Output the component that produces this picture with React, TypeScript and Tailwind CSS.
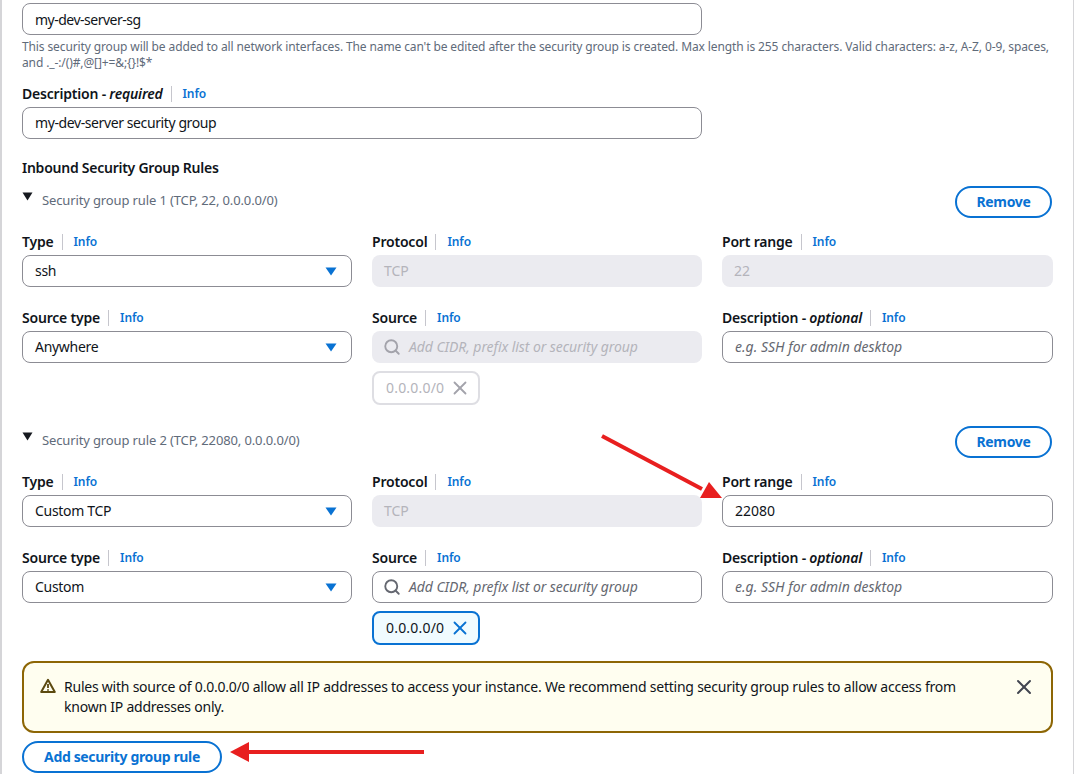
import React from "react";
import { Search, X } from "lucide-react";

function Info() {
  return <span className="text-[12px] font-semibold tracking-[-0.1px] text-[#0972d3] leading-5">Info</span>;
}

function Label({ text, hint }: { text: string; hint?: string }) {
  return (
    <div className="flex items-center h-[17px] pt-px text-[14px] leading-5 tracking-[-0.2px] text-[#0f141a]">
      <span className="font-semibold">
        {text}
        {hint && (
          <>
            {" - "}
            <i className="font-semibold">{hint}</i>
          </>
        )}
      </span>
      <span className="ml-2 mr-[11px] h-4 w-px bg-[#c6c6cd]" />
      <Info />
    </div>
  );
}

function TextBox({ value, placeholder }: { value?: string; placeholder?: string }) {
  return (
    <div className="mt-[5px] h-8 rounded-lg border border-[#8c8c94] bg-white pl-3 pb-[2px] flex items-center text-[14px] text-[#0f141a]">
      {value ? (
        <span className={value === "22080" ? "" : "tracking-[-0.4px]"}>{value}</span>
      ) : (
        <i className="text-[#656871]">{placeholder}</i>
      )}
    </div>
  );
}

function Disabled({ value }: { value: string }) {
  return (
    <div className="mt-[5px] h-8 rounded-lg bg-[#ebebf0] pl-3 pb-[2px] flex items-center text-[14px] text-[#b4b4bb]">
      {value}
    </div>
  );
}

function SelectBox({ value }: { value: string }) {
  return (
    <div className="mt-[5px] h-8 rounded-lg border border-[#8c8c94] bg-white pl-3 pr-[14px] flex items-center justify-between text-[14px] tracking-[-0.3px] text-[#0f141a]">
      <span className="pb-[2px]">{value}</span>
      <svg width="12" height="9" viewBox="0 0 12 9">
        <path d="M0.5 0.5h11L6 8.5z" fill="#0972d3" />
      </svg>
    </div>
  );
}

function SearchBox({ disabled }: { disabled?: boolean }) {
  return (
    <div
      className={
        disabled
          ? "mt-[5px] h-8 rounded-lg bg-[#ebebf0] pl-[11px] flex items-center gap-2 text-[14px] tracking-[-0.07px] text-[#b4b4bb]"
          : "mt-[5px] h-8 rounded-lg border border-[#8c8c94] bg-white pl-[10px] flex items-center gap-2 text-[14px] tracking-[-0.07px] text-[#656871]"
      }
    >
      <Search size={18} strokeWidth={2.5} className={disabled ? "text-[#a3a3ab]" : "text-[#656871]"} />
      <i className="pb-[2px]">Add CIDR, prefix list or security group</i>
    </div>
  );
}

function Token({ disabled }: { disabled?: boolean }) {
  return (
    <div
      className={
        disabled
          ? "mt-2 w-[108px] h-[34px] rounded-lg border-2 border-[#dedee3] bg-white pl-3 flex items-center gap-[5px] text-[14px] tracking-[0.2px] text-[#b4b4bb]"
          : "mt-2 w-[108px] h-[34px] rounded-lg border-2 border-[#0972d3] bg-[#f0fbff] pl-3 flex items-center gap-[5px] text-[14px] tracking-[0.2px] text-[#0f141a]"
      }
    >
      <span className="pb-[2px]">0.0.0.0/0</span>
      <X size={22} strokeWidth={2} className={disabled ? "text-[#a3a3ab]" : "text-[#0972d3]"} />
    </div>
  );
}

function RuleHeader({ title, top }: { title: string; top: string }) {
  return (
    <div className={`${top} flex items-start justify-between pr-px`}>
      <div className="flex items-start pt-[4px] text-[13px] text-[#5f6b7a] tracking-[-0.13px]">
        <svg className="mt-[2px] mr-[9px]" width="11" height="9" viewBox="0 0 11 9">
          <path d="M0.5 0.5h10L5.5 8.5z" fill="#16191f" />
        </svg>
        <span className="leading-5">{title}</span>
      </div>
      <Button text="Remove" width="w-[97px]" />
    </div>
  );
}

function Button({ text, width }: { text: string; width: string }) {
  return (
    <div className={`${width} h-8 rounded-full border-2 border-[#0972d3] pb-px flex items-center justify-center text-[14px] font-bold tracking-[-0.35px] text-[#0972d3]`}>
      {text}
    </div>
  );
}

function Arrows() {
  return (
    <svg className="absolute left-0 top-0 pointer-events-none" width="1087" height="774" viewBox="0 0 1087 774">
      <path d="M602 436L702 489" stroke="#e81f1f" strokeWidth="4" />
      <path d="M722 498L700 498L709 482z" fill="#e81f1f" />
      <path d="M246 752H424" stroke="#e81f1f" strokeWidth="4" />
      <path d="M230 752L249 742V762z" fill="#e81f1f" />
    </svg>
  );
}

export default function App() {
  return (
    <div className="relative w-[1087px] h-[774px] overflow-hidden bg-white font-['Noto_Sans','Open_Sans',sans-serif]">
      <div className="absolute left-0 top-0 h-full w-[2px] bg-[#d5d5d8]" />
      <div className="absolute left-[1073px] top-0 h-full w-px bg-[#d5d5d8]" />
      <div className="w-[1031px] ml-[22px] pt-[3px]">
        <div className="w-[680px] h-8 rounded-lg border border-[#8c8c94] pl-3 flex items-center text-[14px] tracking-[-0.5px] text-[#0f141a]">
          my-dev-server-sg
        </div>
        <p className="mt-1 text-[12px] leading-4 tracking-[-0.115px] text-[#5f6b7a]">
          {"This security group will be added to all network interfaces. The name can't be edited after the security group is created. Max length is 255 characters. Valid characters: a-z, A-Z, 0-9, spaces, and ._-:/()#,@[]+=&;{}!$*"}
        </p>
        <div className="mt-[14px]">
          <Label text="Description" hint="required" />
        </div>
        <div className="w-[680px]">
          <TextBox value="my-dev-server security group" />
        </div>
        <div className="mt-[19px] text-[14px] leading-5 font-semibold tracking-[-0.25px] text-[#0f141a]">Inbound Security Group Rules</div>

        <RuleHeader title="Security group rule 1 (TCP, 22, 0.0.0.0/0)" top="mt-2" />
        <div className="mt-[15px] grid grid-cols-[330px_330px_331px] gap-x-5">
          <div><Label text="Type" /><SelectBox value="ssh" /></div>
          <div><Label text="Protocol" /><Disabled value="TCP" /></div>
          <div><Label text="Port range" /><Disabled value="22" /></div>
        </div>
        <div className="mt-[22px] grid grid-cols-[330px_330px_331px] gap-x-5 items-start">
          <div><Label text="Source type" /><SelectBox value="Anywhere" /></div>
          <div><Label text="Source" /><SearchBox disabled /><Token disabled /></div>
          <div><Label text="Description" hint="optional" /><TextBox placeholder="e.g. SSH for admin desktop" /></div>
        </div>

        <RuleHeader title="Security group rule 2 (TCP, 22080, 0.0.0.0/0)" top="mt-[21px]" />
        <div className="mt-[15px] grid grid-cols-[330px_330px_331px] gap-x-5">
          <div><Label text="Type" /><SelectBox value="Custom TCP" /></div>
          <div><Label text="Protocol" /><Disabled value="TCP" /></div>
          <div><Label text="Port range" /><TextBox value="22080" /></div>
        </div>
        <div className="mt-[22px] grid grid-cols-[330px_330px_331px] gap-x-5 items-start">
          <div><Label text="Source type" /><SelectBox value="Custom" /></div>
          <div><Label text="Source" /><SearchBox /><Token /></div>
          <div><Label text="Description" hint="optional" /><TextBox placeholder="e.g. SSH for admin desktop" /></div>
        </div>

        <div className="mt-4 h-[72px] rounded-xl border-2 border-[#8d6605] bg-[#fffef0] pl-[16px] pr-[15px] flex items-start text-[14px] leading-5 tracking-[-0.23px] text-[#0f141a]">
          <svg className="mt-[15px] shrink-0" width="16" height="16" viewBox="0 0 16 16" fill="none">
            <path d="M8 1.8L14.8 14H1.2z" stroke="#5c4a10" strokeWidth="2" strokeLinejoin="round" />
            <path d="M8 6v4M8 11.2v1.6" stroke="#5c4a10" strokeWidth="1.8" />
          </svg>
          <div className="ml-2 mt-[14px] w-[920px]">
            Rules with source of 0.0.0.0/0 allow all IP addresses to access your instance. We recommend setting security group rules to allow access from known IP addresses only.
          </div>
          <X size={24} strokeWidth={2} className="ml-auto mt-[12px] text-[#424650]" />
        </div>
        <div className="mt-2">
          <Button text="Add security group rule" width="w-[200px]" />
        </div>
      </div>
      <Arrows />
    </div>
  );
}
